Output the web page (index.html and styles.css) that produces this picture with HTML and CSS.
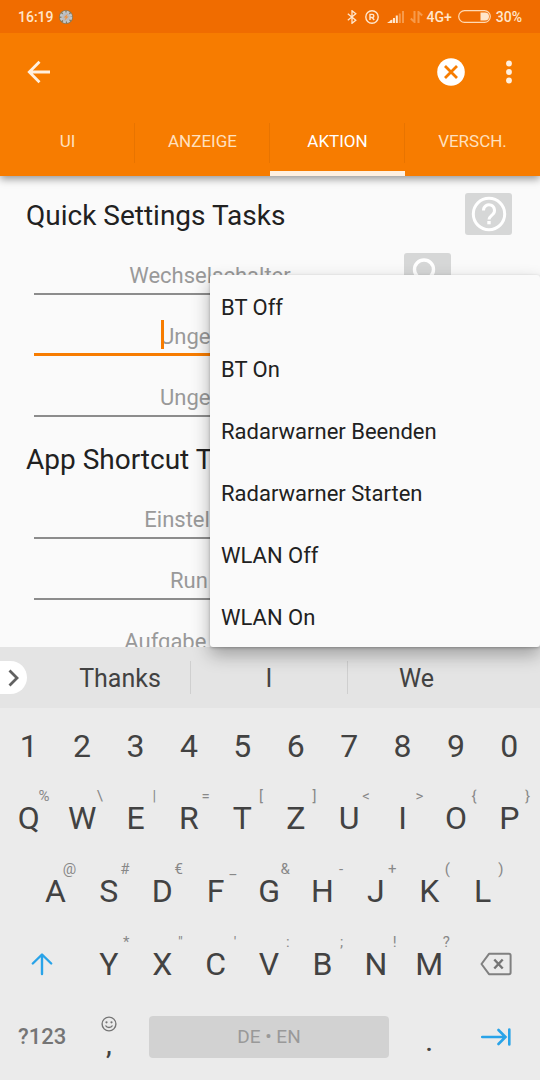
FILE: index.html
```
<!DOCTYPE html>
<html lang="de">
<head>
<meta charset="UTF-8">
<meta name="viewport" content="width=device-width, initial-scale=1">
<title>Tasker - Aktion</title>
<link rel="stylesheet" href="styles.css">
</head>
<body>

<div class="status">
  <span class="time">16:19</span>
  <svg width="14" height="14" viewBox="0 0 14 14"><circle cx="7" cy="7" r="7" fill="#8a7a58"/><circle cx="7" cy="7" r="4.500" fill="#b9bcc0"/><circle cx="7" cy="7" r="5" fill="none" stroke="#c3c6ca" stroke-width="2.400" stroke-dasharray="2.700 1.230"/><path d="M9 3.400L4.600 7.400h2.200L5.400 10.800l4.200-4.400H7.400z" fill="#f0923e"/></svg>
  <span class="spacer"></span>
  <svg class="bt" width="10" height="14" viewBox="0 0 10 14"><path d="M.8 3.800l8 6.400L5 13.300V.7l3.800 3.100-8 6.400" fill="none" stroke="#ffe6cc" stroke-width="1.300"/></svg>
  <svg class="reg" width="14" height="14" viewBox="0 0 14 14"><circle cx="7" cy="7" r="6.200" fill="none" stroke="#ffe6cc" stroke-width="1.400"/><path d="M5 10V4.400h2.300a1.500 1.500 0 0 1 0 3.100H5M7.200 7.500L9.200 10" fill="none" stroke="#ffe6cc" stroke-width="1.400"/></svg>
  <svg class="signal" width="17" height="12" viewBox="0 0 17 12"><path d="M0 12l3-2v2zM3 9.500l2.400-1V12H3zM6 7h2v5H6zM8.800 4.500h2V12h-2z" fill="#ffe6cc"/><path d="M11.800 2.500h2V12h-2zM15 0h2v12h-2z" fill="#f79a4a"/></svg>
  <svg class="data" width="13" height="12" viewBox="0 0 13 12"><path d="M4.500 0v11L.8 7.500M8.500 12V1l3.700 3.500" fill="none" stroke="#f79a4a" stroke-width="2"/></svg>
  <span>4G+</span>
  <svg class="battery" width="33" height="13" viewBox="0 0 33 13"><rect x=".7" y=".7" width="31.600" height="11.600" rx="5.800" fill="none" stroke="#ffd9b3" stroke-width="1.200"/><path d="M22.500 2.500h4.500a4 4 0 0 1 0 8h-4.500z" fill="#ffe6cc"/></svg>
  <span>30%</span>
</div>

<header class="appbar">
  <div class="toolbar">
    <button class="icon" aria-label="Zurück"><svg width="24" height="24" viewBox="0 0 24 24"><path d="M23 12H3M12.500 1.800L2.300 12l10.200 10.200" fill="none" stroke="#fff0e0" stroke-width="2.800"/></svg></button>
    <span class="spacer"></span>
    <button class="icon" aria-label="Abbrechen"><svg width="28" height="28" viewBox="0 0 28 28"><circle cx="14" cy="14" r="13.800" fill="#fff"/><path d="M8 8l12 12M20 8L8 20" stroke="#f77c00" stroke-width="2.800"/></svg></button>
    <button class="icon more" aria-label="Mehr"><svg width="6" height="24" viewBox="0 0 6 24"><circle cx="3" cy="3.500" r="2.900" fill="#fff0e0"/><circle cx="3" cy="12" r="2.900" fill="#fff0e0"/><circle cx="3" cy="20.500" r="2.900" fill="#fff0e0"/></svg></button>
  </div>
  <nav class="tabs">
    <a href="#ui">UI</a>
    <a href="#anzeige">ANZEIGE</a>
    <a href="#aktion" class="active">AKTION</a>
    <a href="#versch">VERSCH.</a>
  </nav>
</header>

<main>
  <form class="prefs">
    <div class="head">
      <h2>Quick Settings Tasks</h2>
      <button type="button" class="tile" aria-label="Hilfe"><svg width="36" height="36" viewBox="0 0 36 36"><circle cx="18" cy="18" r="15.700" fill="none" stroke="#fff" stroke-width="3"/><path d="M12.500 14.500a5.500 5.500 0 1 1 9.400 3.700c-2 2-3.900 2.800-3.900 5.300" fill="none" stroke="#fff" stroke-width="3"/><path d="M16.300 25h3.400v3.300h-3.400z" fill="#fff"/></svg></button>
    </div>
    <div class="row">
      <input type="text" placeholder="Wechselschalter" aria-label="Task 1">
      <button type="button" class="tile" aria-label="Suchen"><svg width="36" height="36" viewBox="0 0 36 36"><circle cx="14" cy="13.500" r="9.500" fill="none" stroke="#fff" stroke-width="3.400"/><path d="M21 20.500l10 10" stroke="#fff" stroke-width="4"/></svg></button>
    </div>
    <div class="row focused">
      <input type="text" placeholder="Ungenutzt" aria-label="Task 2">
    </div>
    <div class="row">
      <input type="text" placeholder="Ungenutzt" aria-label="Task 3">
    </div>
    <div class="head">
      <h2>App Shortcut Tasks</h2>
    </div>
    <div class="row">
      <input type="text" placeholder="Einstellungen" aria-label="Shortcut 1">
    </div>
    <div class="row">
      <input type="text" placeholder="Run Log" aria-label="Shortcut 2">
    </div>
    <div class="row">
      <input type="text" placeholder="Aufgabe erstellen" aria-label="Shortcut 3">
    </div>
  </form>
  <div class="popup">
    <button>BT Off</button>
    <button>BT On</button>
    <button>Radarwarner Beenden</button>
    <button>Radarwarner Starten</button>
    <button>WLAN Off</button>
    <button>WLAN On</button>
  </div>
</main>

<div class="keyboard">
  <div class="suggest">
    <button class="expand" aria-label="Mehr"><svg width="12" height="18" viewBox="0 0 12 18"><path d="M1.500 1.500L9 9l-7.500 7.500" fill="none" stroke="#616161" stroke-width="2.800"/></svg></button>
    <button class="word">Thanks</button>
    <button class="word">I</button>
    <button class="word">We</button>
  </div>
  <div class="keys">
    <div class="krow digits">
      <button>1</button><button>2</button><button>3</button><button>4</button><button>5</button><button>6</button><button>7</button><button>8</button><button>9</button><button>0</button>
    </div>
    <div class="krow">
      <button>Q<sup>%</sup></button>
      <button>W<sup>\</sup></button>
      <button>E<sup>|</sup></button>
      <button>R<sup>=</sup></button>
      <button>T<sup>[</sup></button>
      <button>Z<sup>]</sup></button>
      <button>U<sup>&lt;</sup></button>
      <button>I<sup>&gt;</sup></button>
      <button>O<sup>{</sup></button>
      <button>P<sup>}</sup></button>
    </div>
    <div class="krow">
      <span class="half"></span>
      <button>A<sup>@</sup></button>
      <button>S<sup>#</sup></button>
      <button>D<sup>€</sup></button>
      <button>F<sup>_</sup></button>
      <button>G<sup>&amp;</sup></button>
      <button>H<sup>-</sup></button>
      <button>J<sup>+</sup></button>
      <button>K<sup>(</sup></button>
      <button>L<sup>)</sup></button>
      <span class="half"></span>
    </div>
    <div class="krow">
      <button class="wide" aria-label="Shift"><svg width="22" height="24" viewBox="0 0 22 24"><path d="M11 22V3M1.800 11.500L11 2.500l9.200 9" fill="none" stroke="#29a3e8" stroke-width="2.400" stroke-linecap="round" stroke-linejoin="round"/></svg></button>
      <button>Y<sup>*</sup></button>
      <button>X<sup>"</sup></button>
      <button>C<sup>'</sup></button>
      <button>V<sup>:</sup></button>
      <button>B<sup>;</sup></button>
      <button>N<sup>!</sup></button>
      <button>M<sup>?</sup></button>
      <button class="wide" aria-label="Löschen"><svg width="32" height="24" viewBox="0 0 32 24"><path d="M9 1.800h20a1.600 1.600 0 0 1 1.600 1.600v17.200a1.600 1.600 0 0 1-1.600 1.600H9L1.500 12z" fill="none" stroke="#808080" stroke-width="2" stroke-linejoin="round"/><path d="M14.300 7.500l8.400 9M22.700 7.500l-8.400 9" stroke="#757575" stroke-width="2.400"/></svg></button>
    </div>
    <div class="krow">
      <button class="wide sym">?123</button>
      <button class="comma"><svg width="16" height="16" viewBox="0 0 16 16"><circle cx="8" cy="8" r="6.900" fill="none" stroke="#757575" stroke-width="1.400"/><circle cx="5.500" cy="6.300" r="1.100" fill="#757575"/><circle cx="10.500" cy="6.300" r="1.100" fill="#757575"/><path d="M4.500 9.500a4 4 0 0 0 7 0" fill="none" stroke="#757575" stroke-width="1.400"/></svg>,</button>
      <button class="space">DE • EN</button>
      <button class="dot">.</button>
      <button class="wide" aria-label="Weiter"><svg width="30" height="20" viewBox="0 0 30 20"><path d="M1.200 10H24M17.500 3l7 7-7 7M28.300 2.500v15" fill="none" stroke="#29a3e8" stroke-width="2.600" stroke-linecap="round"/></svg></button>
    </div>
  </div>
</div>

</body>
</html>
```

FILE: styles.css
```
* {box-sizing:border-box;}
body {margin:0; height:100vh; display:flex; flex-direction:column; overflow:hidden; background:#fafafa; color:#212121; font-family:Roboto, "Noto Sans", sans-serif;}
button, input {font:inherit; color:inherit; border:0; margin:0; padding:0; background:none;}
svg {display:block; flex:none;}
.spacer {flex:1;}

.status {position:relative; z-index:4; display:flex; align-items:center; height:33px; padding:0 18px; background:#f06c00; color:#ffe6cc; font-size:14px; font-weight:500;}
.status .time {margin-right:5px; font-size:14px;}
.bt {margin-right:8px;}
.reg {margin-right:8px;}
.signal {margin-right:6px;}
.data {margin-right:4px;}
.battery {margin:0 5px 0 6px;}

.appbar {position:relative; z-index:3; background:#f77c00; box-shadow:0 3px 8px rgba(0,0,0,0.4);}
.toolbar {display:flex; align-items:center; height:76px; padding:1px 28px 0 27px;}
.icon.more {margin-left:41px;}
.tabs {display:flex; height:67px;}
.tabs a {position:relative; flex:1; display:flex; align-items:center; justify-content:center; padding-top:2px; border-bottom:5px solid transparent; color:#ffe0bf; font-size:17px; text-decoration:none;}
.tabs a.active {color:#fff; border-color:#fff0e0;}
.tabs a + a::before {content:""; position:absolute; left:-1px; top:14px; width:1px; height:40px; background:#e87400;}

main {position:relative; z-index:2; flex:1; min-height:0;}
.prefs {height:100%; overflow:hidden; padding:17px 28px 0 26px;}
.head {display:flex; align-items:center; justify-content:space-between; height:42px; margin-bottom:8px;}
.row + .head {margin-top:11px;}
h2 {margin:0; padding-top:2px; font-size:28px; font-weight:400;}
.tile {display:flex; align-items:center; justify-content:center; width:47px; height:42px; border-radius:3px; background:#d6d7d7;}
.row {position:relative; display:grid; grid-template-columns:1fr 47px 47px; column-gap:14px; align-items:center; height:61px; padding-left:8px;}
.row input {min-width:0; height:42px; margin-right:4px; padding-top:6px; border-bottom:2px solid #8c8c8c; border-radius:0; text-align:center; font-size:22px; outline:none;}
.row input::placeholder {color:#999; opacity:1;}
.row.focused input {border-bottom:3px solid #f77c00;}
/* text cursor in front of the hint */
.row.focused::after {content:""; position:absolute; left:135px; top:16px; width:3px; height:29px; background:#f77c00;}

.popup {position:absolute; left:210px; right:0; bottom:0; display:flex; flex-direction:column; border-radius:3px; background:#fafafa; box-shadow:0 8px 18px rgba(0,0,0,0.3), 0 1px 3px rgba(0,0,0,0.25);}
.popup button {height:62px; padding:2px 11px 0; text-align:left; font-size:22px;}

.keyboard {background:#ebebeb; color:#424242;}
.suggest {display:flex; align-items:center; height:61px; padding-right:55px; background:#e4e4e4;}
.expand {display:flex; align-items:center; width:27px; height:33px; margin-right:23px; padding-left:8px; border-radius:0 17px 17px 0; background:#fff;}
.word {flex:141; height:33px; padding-top:2px; font-size:25px;}
.word + .word {flex:157; border-left:1px solid #cfcfcf;}
.word + .word + .word {flex:138;}
.keys {padding:3px 4px 7px 2px;}
.krow {display:flex; height:73px;}
.krow.digits {height:70px;}
.krow button {position:relative; flex:2 1 0; display:flex; align-items:center; justify-content:center; font-size:32px;}
.krow .wide {flex-grow:3;}
.half {flex:1 1 0;}
.krow sup {position:absolute; top:7px; right:6px; color:#888; font-size:15px; line-height:16px;}
.krow .sym {color:#757575; font-size:22px; font-weight:500;}
.krow .comma {flex-direction:column; font-size:26px; line-height:26px; font-weight:500;}
.krow .dot {padding-top:10px; font-size:26px; font-weight:500;}
.krow .space {flex-grow:9; height:42px; margin:auto 13px; border-radius:4px; background:#d2d2d2; color:#999; font-size:19px;}
```
